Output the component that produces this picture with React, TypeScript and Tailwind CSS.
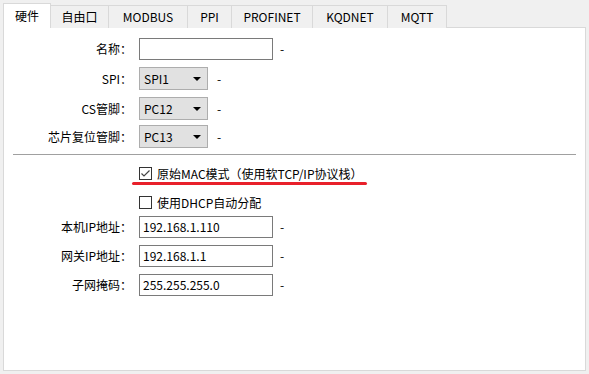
import React from "react";

const tabs = [
  { label: "硬件", w: "w-[48px]", active: true },
  { label: "自由口", w: "w-[58px]" },
  { label: "MODBUS", w: "w-[79px]" },
  { label: "PPI", w: "w-[44px]" },
  { label: "PROFINET", w: "w-[81px]" },
  { label: "KQDNET", w: "w-[75px]" },
  { label: "MQTT", w: "w-[59px]" },
];

function Label({ text }: { text: string }) {
  return <div className="w-[128px] shrink-0 text-right whitespace-nowrap">{text}</div>;
}

function TextRow({ label, value, className }: { label: string; value: string; className?: string }) {
  return (
    <div className={`flex items-center h-[22px] ${className ?? ""}`}>
      <Label text={label} />
      <div className="ml-[7px] w-[134px] h-[22px] border border-[#7a7a7a] bg-white flex items-center pl-[3px]">
        {value}
      </div>
      <div className="ml-[7px]">-</div>
    </div>
  );
}

function SelectRow({ label, value, className }: { label: string; value: string; className?: string }) {
  return (
    <div className={`flex items-center h-[23px] ${className ?? ""}`}>
      <Label text={label} />
      <div className="ml-[7px] w-[69px] h-[23px] border border-[#adadad] bg-[#e1e1e1] flex items-center justify-between pl-[4px] pr-[6px]">
        <span>{value}</span>
        <svg width="8" height="4" viewBox="0 0 8 4">
          <polygon points="0,0 8,0 4,4" fill="#000" />
        </svg>
      </div>
      <div className="ml-[9px]">-</div>
    </div>
  );
}

function Check({ checked }: { checked?: boolean }) {
  return (
    <div className="w-[13px] h-[13px] border border-[#333] bg-white shrink-0 flex items-center justify-center">
      {checked && (
        <svg width="11" height="11" viewBox="0 0 11 11">
          <polyline points="1.5,5.5 4,8 9.5,2.5" fill="none" stroke="#444" strokeWidth="1.2" />
        </svg>
      )}
    </div>
  );
}

export default function App() {
  return (
    <div className="w-[589px] h-[374px] bg-[#f0f0f0] pt-[3px] pl-[3px] pr-[3px] pb-[3px] flex flex-col text-[12px] text-black font-['Microsoft_YaHei','Noto_Sans_CJK_SC',sans-serif] leading-none">
      {/* tabs */}
      <div className="flex items-end h-[25px] -mb-px relative z-10">
        {tabs.map((t) =>
          t.active ? (
            <div
              key={t.label}
              className={`${t.w} h-[25px] bg-white border border-[#d9d9d9] border-b-0 flex items-center justify-center pb-[1px]`}
            >
              {t.label}
            </div>
          ) : (
            <div
              key={t.label}
              className={`${t.w} h-[23px] bg-[#f0f0f0] border border-[#d9d9d9] border-b-0 border-l-0 flex items-center justify-center`}
            >
              {t.label}
            </div>
          )
        )}
      </div>

      {/* panel */}
      <div className="flex-1 bg-white border border-[#d9d9d9] pt-[10px]">
        <TextRow label="名称：" value="" />
        <SelectRow label="SPI：" value="SPI1" className="mt-[7px]" />
        <SelectRow label="CS管脚：" value="PC12" className="mt-[7px]" />
        <SelectRow label="芯片复位管脚：" value="PC13" className="mt-[5px]" />

        <div className="mt-[6px] ml-[9px] mr-[9px] h-px bg-[#a0a0a0]" />

        <div className="mt-[12px] ml-[135px] flex items-center h-[13px] relative">
          <Check checked />
          <span className="ml-[5px] whitespace-nowrap">原始MAC模式（使用软TCP/IP协议栈）</span>
          <div className="absolute left-[-7px] top-[15px] w-[235px] h-[3px] rounded-full bg-[#e8202a]" />
        </div>

        <div className="mt-[16px] ml-[135px] flex items-center h-[13px]">
          <Check />
          <span className="ml-[5px] whitespace-nowrap">使用DHCP自动分配</span>
        </div>

        <TextRow label="本机IP地址：" value="192.168.1.110" className="mt-[7px]" />
        <TextRow label="网关IP地址：" value="192.168.1.1" className="mt-[7px]" />
        <TextRow label="子网掩码：" value="255.255.255.0" className="mt-[7px]" />
      </div>
    </div>
  );
}
